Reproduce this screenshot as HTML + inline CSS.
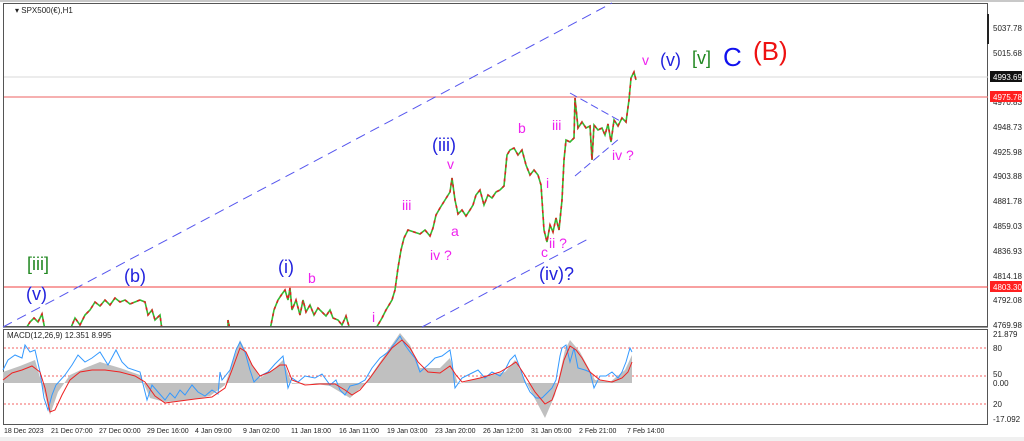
<!DOCTYPE html>
<html><head><meta charset="utf-8"><style>
html,body{margin:0;padding:0;background:#fff;}
svg{display:block;font-family:"Liberation Sans",sans-serif;}
</style></head><body>
<svg width="1024" height="441" viewBox="0 0 1024 441" xmlns="http://www.w3.org/2000/svg">
<rect width="1024" height="441" fill="#fff"/>
<rect x="0" y="0" width="1024" height="2" fill="#c8c8c8"/>
<rect x="0" y="437" width="1024" height="4" fill="#f0f0f0"/>
<rect x="3.5" y="3.5" width="984" height="323" fill="#fff" stroke="#555" stroke-width="1"/>
<rect x="3.5" y="329.5" width="984" height="95" fill="#fff" stroke="#555" stroke-width="1"/>
<line x1="3" y1="327.5" x2="988" y2="327.5" stroke="#999"/>
<text x="15" y="13" font-size="8" fill="#222">▾ SPX500(€),H1</text>
<line x1="4" y1="77" x2="988" y2="77" stroke="#d8d8d8" stroke-width="1"/>
<line x1="4" y1="97" x2="988" y2="97" stroke="#f08080" stroke-width="1.3"/>
<line x1="4" y1="287" x2="988" y2="287" stroke="#f04040" stroke-width="1"/>
<line x1="3" y1="327" x2="612" y2="3" stroke="#5555ee" stroke-width="1" stroke-dasharray="10,6"/>
<line x1="422" y1="327" x2="590" y2="238" stroke="#5555ee" stroke-width="1" stroke-dasharray="10,6"/>
<line x1="570" y1="93" x2="622" y2="122" stroke="#5555ee" stroke-width="1" stroke-dasharray="8,4"/>
<line x1="575" y1="176" x2="620" y2="138" stroke="#5555ee" stroke-width="1" stroke-dasharray="8,4"/>
<clipPath id="c1"><rect x="4" y="4" width="983" height="322"/></clipPath>
<g clip-path="url(#c1)" fill="none" stroke-width="1.6">
<g id="p1">
<polyline points="25,330 30,322 34,318 38,322 42,314 45,330"/>
<polyline points="70,330 75,318 80,325 85,315 90,310 95,302 100,306 105,300 110,305 115,298 120,302 125,300 130,304 140,300 145,302 148,315 152,310 155,320 160,315 162,330"/>
<polyline points="228,330 228,320 230,330"/>
<polyline points="270,330 274,310 278,300 282,294 285,290 288,300 290,288 292,310 296,300 300,315 303,300 306,312 310,305 314,315 318,308 322,312 326,316 330,310 333,318 338,320 342,325 346,316 350,330"/>
<polyline points="375,330 382,318 386,310 392,300 395,290 398,268 401,250 404,238 408,230 414,232 420,234 425,230 430,236 433,228 436,215 440,208 445,200 450,192 452,178 455,200 458,214 462,210 466,216 470,210 473,205 476,195 480,190 484,205 488,195 492,198 496,192 500,190 504,186 507,155 510,150 514,148 518,155 522,150 526,165 530,175 534,170 538,175 541,185 544,230 547,242 550,225 553,232 556,218 559,230 562,200 564,160 566,140 570,142 574,138 575,98 578,128 582,122 586,128 590,126 592,160 594,125 598,130 602,128 605,135 608,124 611,142 614,120 618,126 622,118 626,122 629,100 631,78 634,72 636,80"/>
</g>
</g>
<g clip-path="url(#c1)" fill="none" stroke-width="1.6" stroke="#33bb33">
<use href="#p1"/>
</g>
<g clip-path="url(#c1)" fill="none" stroke-width="1.6" stroke="#dd2222" stroke-dasharray="3,4">
<use href="#p1"/>
</g>
<g font-size="14" fill="#ee22ee">
<text x="642" y="65">v</text>
<text x="552" y="130">iii</text>
<text x="518" y="133">b</text>
<text x="447" y="169">v</text>
<text x="402" y="210">iii</text>
<text x="451" y="236">a</text>
<text x="430" y="260">iv ?</text>
<text x="546" y="188">i</text>
<text x="549" y="248">ii ?</text>
<text x="541" y="257">c</text>
<text x="612" y="160">iv ?</text>
<text x="372" y="322">i</text>
<text x="308" y="283">b</text>
</g>
<g font-size="18" fill="#2222dd">
<text x="660" y="66">(v)</text>
<text x="432" y="151">(iii)</text>
<text x="539" y="280">(iv)?</text>
<text x="124" y="282">(b)</text>
<text x="26" y="300">(v)</text>
<text x="278" y="273">(i)</text>
</g>
<text x="692" y="64" font-size="18" fill="#228822">[v]</text>
<text x="27" y="270" font-size="18" fill="#228822">[iii]</text>
<text x="723" y="66" font-size="26" fill="#1111ee">C</text>
<text x="753" y="60" font-size="26" fill="#ee1111">(B)</text>
<g font-size="8" fill="#222">
<text x="993" y="31">5037.78</text>
<text x="993" y="56">5015.68</text>
<text x="993" y="105">4970.83</text>
<text x="993" y="130">4948.73</text>
<text x="993" y="155">4925.98</text>
<text x="993" y="179">4903.88</text>
<text x="993" y="204">4881.78</text>
<text x="993" y="229">4859.03</text>
<text x="993" y="254">4836.93</text>
<text x="993" y="279">4814.18</text>
<text x="993" y="303">4792.08</text>
<text x="993" y="328">4769.98</text>
</g>
<rect x="987" y="14" width="2" height="30" fill="#222"/>
<rect x="990" y="71" width="32" height="11" fill="#111"/>
<text x="993" y="80" font-size="8" fill="#fff">4993.69</text>
<rect x="990" y="91" width="32" height="11" fill="#ff2020"/>
<text x="993" y="100" font-size="8" fill="#fff">4975.78</text>
<rect x="990" y="281" width="32" height="11" fill="#ff2020"/>
<text x="993" y="290" font-size="8" fill="#fff">4803.30</text>
<text x="7" y="338" font-size="8" fill="#222">MACD(12,26,9) 12.351 8.995</text>
<g stroke="#f03030" stroke-width="0.8" stroke-dasharray="2,2">
<line x1="4" y1="348" x2="987" y2="348"/>
<line x1="4" y1="376" x2="987" y2="376"/>
<line x1="4" y1="404" x2="987" y2="404"/>
</g>
<polygon fill="#c0c0c0" points="3,383 3,372 20,366 35,360 45,395 50,415 58,392 70,375 85,368 100,362 120,368 140,375 150,398 165,402 190,400 210,396 225,385 240,340 250,360 260,378 275,368 283,360 292,384 310,383 330,386 350,398 365,384 380,362 400,333 410,345 420,368 440,368 450,358 458,384 480,378 505,372 515,360 525,380 545,418 555,395 565,350 570,340 580,352 595,380 610,382 625,370 632,355 632,383"/>
<g fill="none" stroke-width="1">
<polyline stroke="#3399ff" points="3,370 8,360 15,355 22,358 25,345 30,352 35,350 40,372 44,398 48,410 52,395 56,385 65,375 72,365 78,355 85,362 92,358 100,352 108,365 116,350 122,362 128,368 140,372 147,400 152,385 158,392 165,400 170,393 175,398 180,390 185,395 192,385 198,392 205,396 212,390 218,394 220,372 222,380 230,370 236,350 240,342 245,352 250,370 254,382 260,376 268,372 275,364 283,356 288,388 292,378 298,382 305,376 315,378 322,374 330,385 336,380 340,390 345,395 350,386 358,384 365,380 372,368 380,358 388,352 395,343 400,336 405,345 410,352 415,358 420,372 428,365 435,358 442,356 450,350 452,362 455,388 462,378 470,374 478,370 485,378 492,372 500,376 506,368 510,360 515,355 520,368 525,382 530,392 536,398 542,398 548,392 552,388 556,380 560,356 562,348 566,345 570,362 574,348 578,368 585,370 590,372 594,388 600,376 606,376 612,372 618,378 622,372 626,362 630,348 632,352"/>
<polyline stroke="#ee2222" points="3,380 12,373 22,370 32,366 40,372 45,388 50,412 55,410 62,395 70,380 80,372 92,370 105,370 120,372 135,376 145,382 155,396 165,403 180,401 195,399 212,397 225,388 232,370 240,348 246,352 252,365 260,376 270,372 280,365 286,365 292,380 305,385 320,384 335,384 345,390 352,395 360,390 370,378 380,364 392,348 402,340 410,348 418,362 428,372 440,373 450,366 456,375 462,382 480,378 500,372 510,366 516,362 524,374 535,392 545,404 552,400 558,384 564,360 570,346 576,350 582,358 590,372 600,380 612,382 622,378 628,372 632,362"/>
</g>
<g font-size="8" fill="#222">
<text x="993" y="337">21.879</text>
<text x="993" y="351">80</text>
<text x="993" y="377">50</text>
<text x="993" y="386">0.00</text>
<text x="993" y="407">20</text>
<text x="993" y="422">-17.092</text>
</g>
<g font-size="7" fill="#222">
<text x="4" y="433">18 Dec 2023</text>
<text x="51" y="433">21 Dec 07:00</text>
<text x="99" y="433">27 Dec 00:00</text>
<text x="147" y="433">29 Dec 16:00</text>
<text x="195" y="433">4 Jan 09:00</text>
<text x="243" y="433">9 Jan 02:00</text>
<text x="291" y="433">11 Jan 18:00</text>
<text x="339" y="433">16 Jan 11:00</text>
<text x="387" y="433">19 Jan 03:00</text>
<text x="435" y="433">23 Jan 20:00</text>
<text x="483" y="433">26 Jan 12:00</text>
<text x="531" y="433">31 Jan 05:00</text>
<text x="579" y="433">2 Feb 21:00</text>
<text x="627" y="433">7 Feb 14:00</text>
</g>
</svg>
</body></html>
